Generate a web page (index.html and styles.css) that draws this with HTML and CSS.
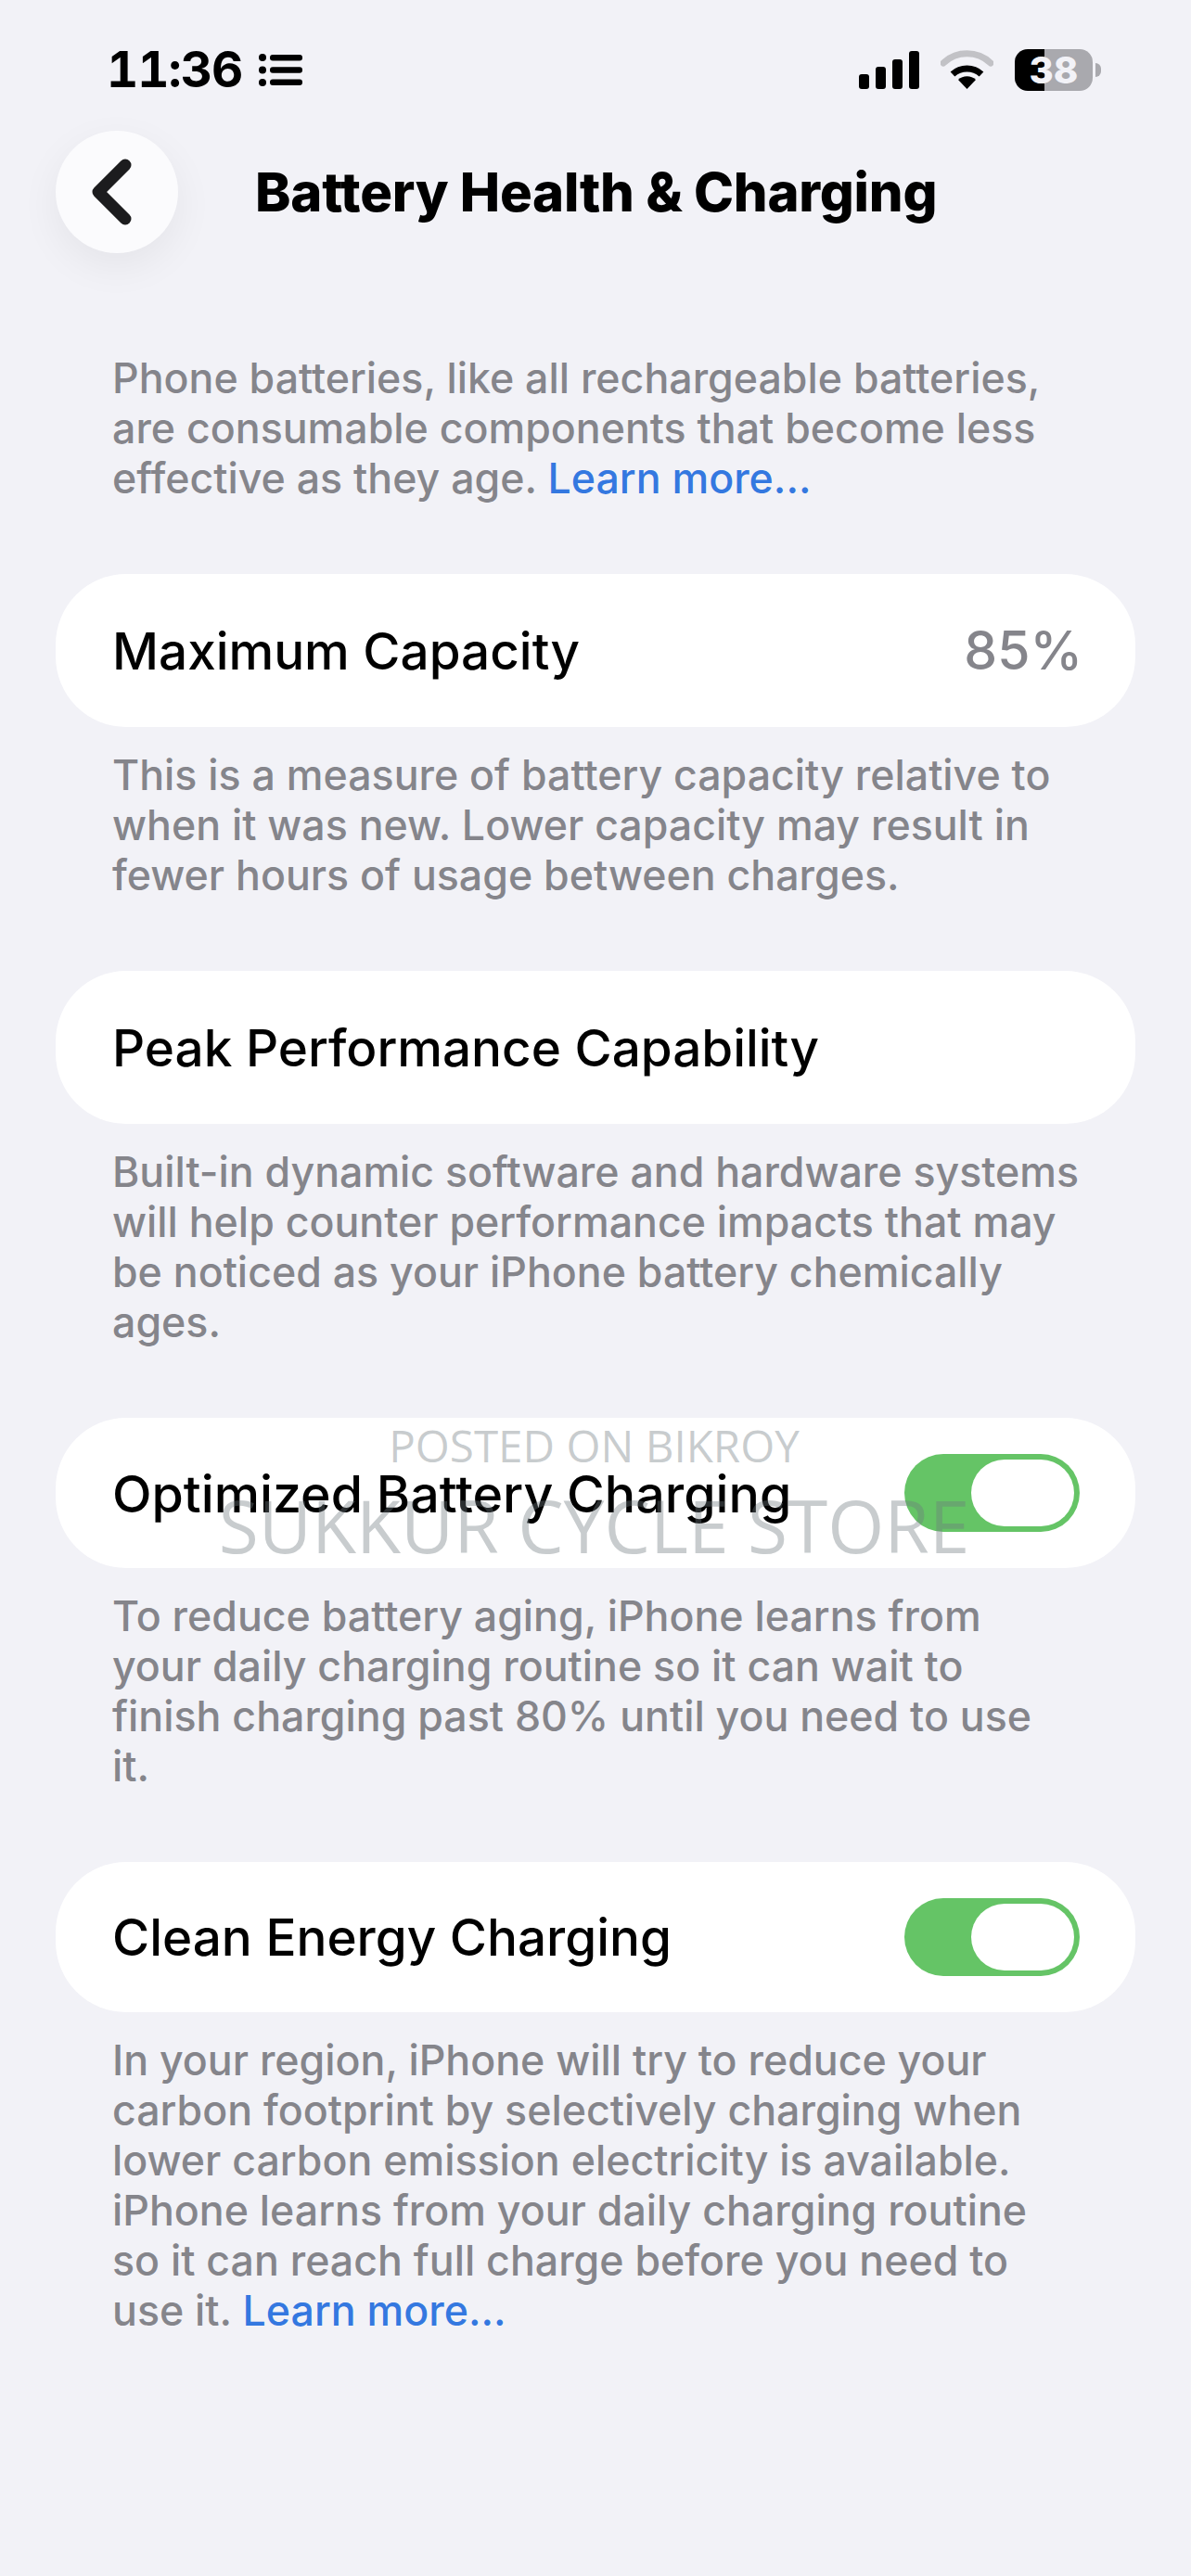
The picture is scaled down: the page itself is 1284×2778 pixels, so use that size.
FILE: index.html
```html
<!DOCTYPE html>
<html lang="en">
<head>
  <meta charset="UTF-8">
  <title>Battery Health &amp; Charging</title>
  <link rel="stylesheet" href="styles.css">
</head>
<body>

  <div class="status-bar">
    <div class="status-left">
      <span class="time">11:36</span>
      <svg class="focus-icon" width="47" height="35" viewBox="0 0 47 35">
        <circle cx="4" cy="4" r="4" />
        <circle cx="4" cy="17.5" r="4" />
        <circle cx="4" cy="31" r="4" />
        <rect x="12" y="1" width="35" height="6.5" rx="3" />
        <rect x="12" y="14.2" width="35" height="6.5" rx="3" />
        <rect x="12" y="27.5" width="35" height="6.5" rx="3" />
      </svg>
    </div>
    <div class="status-right">
      <svg class="signal-icon" width="65" height="41" viewBox="0 0 65 41">
        <rect x="0" y="25" width="11" height="16" rx="3" />
        <rect x="18" y="17" width="11" height="24" rx="3" />
        <rect x="36" y="9" width="11" height="32" rx="3" />
        <rect x="54" y="0" width="11" height="41" rx="3" />
      </svg>
      <svg class="wifi-icon" width="57" height="42" viewBox="0 0 57 42">
        <path d="M3 14 A37 37 0 0 1 54 14" fill="none" stroke="#c2c2c6" stroke-width="7" stroke-linecap="round" />
        <path d="M13 26 A23 23 0 0 1 44 26" fill="none" stroke="#000" stroke-width="7" />
        <path d="M28.5 42 L19 32 A14 14 0 0 1 38 32 Z" fill="#000" />
      </svg>
      <div class="battery">
        <span class="battery-level">38</span>
        <span class="battery-nub"></span>
      </div>
    </div>
  </div>

  <header class="nav">
    <button class="back-btn">
      <svg width="44" height="72" viewBox="0 0 44 72">
        <path d="M36 7 L7 36 L36 65" fill="none" stroke="#1c1c1e" stroke-width="13" stroke-linecap="round" stroke-linejoin="round" />
      </svg>
    </button>
    <h1>Battery Health &amp; Charging</h1>
  </header>

  <main class="settings">
    <p class="note">Phone batteries, like all rechargeable batteries,<br>are consumable components that become less<br>effective as they age. <a href="#">Learn more...</a></p>

    <div class="card tall">
      <span class="label">Maximum Capacity</span>
      <span class="value">85%</span>
    </div>
    <p class="note">This is a measure of battery capacity relative to<br>when it was new. Lower capacity may result in<br>fewer hours of usage between charges.</p>

    <div class="card tall">
      <span class="label">Peak Performance Capability</span>
    </div>
    <p class="note">Built-in dynamic software and hardware systems<br>will help counter performance impacts that may<br>be noticed as your iPhone battery chemically<br>ages.</p>

    <div class="card">
      <span class="label wide">Optimized Battery Charging</span>
      <span class="toggle"><span class="knob"></span></span>
      <div class="watermark">
        <span class="wm-small">POSTED ON BIKROY</span>
        <span class="wm-big">SUKKUR CYCLE STORE</span>
      </div>
    </div>
    <p class="note">To reduce battery aging, iPhone learns from<br>your daily charging routine so it can wait to<br>finish charging past 80% until you need to use<br>it.</p>

    <div class="card">
      <span class="label">Clean Energy Charging</span>
      <span class="toggle"><span class="knob"></span></span>
    </div>
    <p class="note">In your region, iPhone will try to reduce your<br>carbon footprint by selectively charging when<br>lower carbon emission electricity is available.<br>iPhone learns from your daily charging routine<br>so it can reach full charge before you need to<br>use it. <a href="#">Learn more...</a></p>
  </main>

</body>
</html>
```

FILE: styles.css
```css
html, body {
  margin: 0;
  padding: 0;
}
body {
  width: 1284px;
  height: 2778px;
  overflow: hidden;
  background-color: #f2f2f7;
  color: #000;
  font-family: Inter, "Liberation Sans", sans-serif;
}
.status-bar {
  height: 141px;
  box-sizing: border-box;
  padding: 53px 106px 0 115px;
  display: flex;
  justify-content: space-between;
  align-items: flex-start;
}
.status-left {
  display: flex;
  align-items: center;
  gap: 18px;
  height: 44px;
}
.time {
  font-size: 53px;
  font-weight: 700;
  line-height: 44px;
  letter-spacing: -1px;
  font-variant-numeric: tabular-nums;
}
.status-right {
  display: flex;
  align-items: flex-start;
  gap: 23px;
}
.signal-icon {
  margin-top: 2px;
}
.wifi-icon {
  margin-top: 1px;
}
.battery {
  position: relative;
  width: 84px;
  height: 45px;
  border-radius: 14px;
  background: linear-gradient(90deg, #000 32px, #a9a9ae 32px);
  display: flex;
  align-items: center;
  justify-content: center;
}
.battery-level {
  color: #f2f2f7;
  font-size: 40px;
  font-weight: 800;
  line-height: 1;
}
.battery-nub {
  position: absolute;
  right: -9px;
  top: 15px;
  width: 6px;
  height: 15px;
  border-radius: 0 8px 8px 0;
  background-color: #a9a9ae;
}
.nav {
  display: flex;
  align-items: center;
  gap: 83px;
  padding-left: 60px;
  height: 132px;
}
.nav h1 {
  margin: 0;
  font-size: 58px;
  font-weight: 800;
  letter-spacing: -0.25px;
  white-space: nowrap;
}
.back-btn {
  width: 132px;
  height: 132px;
  border: 0;
  padding: 0 10px 0 0;
  border-radius: 50%;
  background-color: #fbfbfd;
  box-shadow: 0 14px 44px rgba(0, 0, 0, 0.06);
  display: flex;
  align-items: center;
  justify-content: center;
  flex-shrink: 0;
}
.settings {
  padding: 108px 60px 0 60px;
}
.note {
  margin: 0 0 76px 0;
  padding: 0 61px;
  color: #85858b;
  font-size: 44.7px;
  font-weight: 530;
  line-height: 54px;
  white-space: nowrap;
}
.card + .note {
  margin-top: 25px;
}
.note a {
  color: #3478e0;
  text-decoration: none;
}
.card {
  position: relative;
  height: 162px;
  box-sizing: border-box;
  padding: 0 60px 0 61px;
  background-color: #fff;
  border-radius: 76px;
  display: flex;
  justify-content: space-between;
  align-items: center;
}
.card.tall {
  height: 165px;
}
.label {
  font-size: 54.8px;
  font-weight: 550;
}
.label.wide {
  font-size: 55.5px;
}
.value {
  margin-right: -3px;
  color: #85858b;
  font-size: 57px;
  font-weight: 500;
}
.toggle {
  width: 189px;
  height: 84px;
  box-sizing: border-box;
  padding: 6px;
  border-radius: 42px;
  background-color: #65c466;
  display: flex;
  justify-content: flex-end;
}
.knob {
  width: 111px;
  height: 72px;
  border-radius: 36px;
  background-color: #fff;
}
.watermark {
  position: absolute;
  left: 176px;
  top: 0;
  width: 809px;
  display: flex;
  flex-direction: column;
  align-items: center;
  font-family: "Open Sans", "Noto Sans", sans-serif;
  font-weight: 400;
  color: rgba(110, 120, 125, 0.38);
  white-space: nowrap;
}
.wm-small {
  margin-top: 2px;
  font-size: 47.6px;
  line-height: 56px;
}
.wm-big {
  margin-top: 10px;
  font-size: 78.5px;
  line-height: 96px;
}
```
